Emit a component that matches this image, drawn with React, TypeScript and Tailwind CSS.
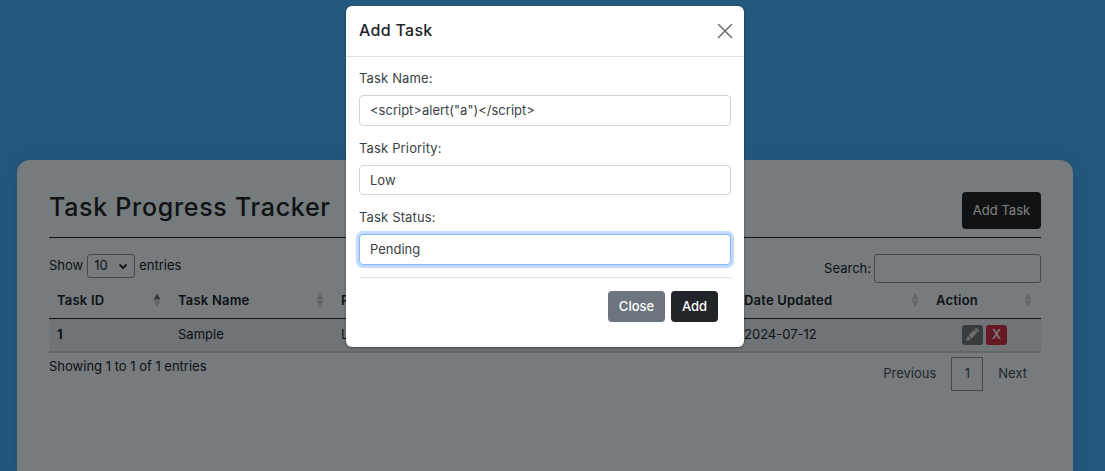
import { BsPencilFill } from "react-icons/bs"
import { X } from "lucide-react"

function SortMark({ active }: { active?: boolean }) {
  return (
    <svg width="8" height="14" viewBox="0 0 8 14" className="shrink-0">
      <path d="M4 0.5 7.5 6.5H0.5Z" fill="#1a1d20" opacity={active ? 0.6 : 0.2} />
      <path d="M4 13.5 0.5 7.5H7.5Z" fill="#1a1d20" opacity="0.2" />
    </svg>
  )
}

const columns = [
  { label: "Task ID", width: "w-[121px]", active: true },
  { label: "Task Name", width: "w-[163px]" },
  { label: "Priority", width: "w-[403px]" },
  { label: "Date Updated", width: "w-[192px]" },
  { label: "Action", width: "w-[113px]" },
]

function Tracker() {
  return (
    <div className="mr-[32px] ml-[17px] h-[320px] rounded-t-[13px] bg-[#edf6fb] bg-[radial-gradient(circle_at_50%_100%,#eaf7f7_0,#edf6fb_200px)] px-8 pt-8 shadow-[0_0_20px_rgba(0,0,0,0.12)]">
      <div className="flex h-[46px] items-start justify-between border-b border-[#212529] pb-2">
        <h1 className="text-[25px] leading-[30px] font-medium tracking-[0.7px] text-[#212529]">Task Progress Tracker</h1>
        <button className="h-[37px] w-[79px] rounded-[4px] bg-[#212529] text-[13px] text-white">Add Task</button>
      </div>

      <div className="mt-4 flex h-[29px] items-start justify-between text-[13px] text-[#212529]">
        <div className="flex h-6 items-center gap-1">
          <span>Show</span>
          <div className="flex h-6 w-12 items-center justify-between rounded-[3px] border border-[#8f9396] px-[6px]">
            <span>10</span>
            <svg width="10" height="10" viewBox="0 0 10 10">
              <path d="M1.5 3.5 5 7 8.5 3.5" fill="none" stroke="#212529" strokeWidth="1.8" />
            </svg>
          </div>
          <span>entries</span>
        </div>
        <div className="flex items-center gap-[3px]">
          <span>Search:</span>
          <div className="h-[29px] w-[167px] rounded-[3px] border border-[#8f9396]" />
        </div>
      </div>

      <table className="w-[992px] table-fixed border-collapse text-[13px] text-[#212529]">
        <thead>
          <tr className="h-[35px] border-b border-[#212529]">
            {columns.map((c) => (
              <th key={c.label} className={`${c.width} px-2 text-left font-semibold`}>
                <div className="flex items-center justify-between pr-[1px] tracking-[0.2px]">
                  <span>{c.label}</span>
                  <SortMark active={c.active} />
                </div>
              </th>
            ))}
          </tr>
        </thead>
        <tbody>
          <tr className="h-[34px] border-b-2 border-[#c6cace] bg-[#e1e9ef]">
            <td className="px-2 font-bold">1</td>
            <td className="px-2">Sample</td>
            <td className="px-2">Low</td>
            <td className="px-2">2024-07-12</td>
            <td className="px-2">
              <div className="flex items-center gap-[3px] pl-[26px]">
                <span className="flex h-5 w-[21px] items-center justify-center rounded-[3px] bg-[#72777b] text-[#d8dadc]">
                  <BsPencilFill size={13} />
                </span>
                <span className="flex h-5 w-[21px] items-center justify-center rounded-[3px] bg-[#cc3348] text-[13px] font-medium text-white">X</span>
              </div>
            </td>
          </tr>
        </tbody>
      </table>

      <div className="flex items-start justify-between text-[13px] text-[#212529]">
        <span className="pt-[4px]">Showing 1 to 1 of 1 entries</span>
        <div className="mt-[4px] flex items-center gap-[15px] pr-[14px] text-[#4b5156]">
          <span>Previous</span>
          <span className="flex h-[34px] w-[32px] items-center justify-center border border-[#8f9396]">1</span>
          <span>Next</span>
        </div>
      </div>
    </div>
  )
}

function Field({ label, value, focused }: { label: string; value: string; focused?: boolean }) {
  return (
    <div className="mb-[12px]">
      <label className="mb-[6px] block h-[21px] text-[13px] leading-[21px] tracking-[0.15px] text-[#3a3f44]">{label}</label>
      <input
        readOnly
        value={value}
        className={
          focused
            ? "block h-[30.5px] w-full rounded-[4px] border border-[#86b7fe] bg-white px-[10px] text-[13px] text-[#3a3f44] shadow-[0_0_0_3px_rgba(13,110,253,0.25)] outline-none"
            : "block h-[30.5px] w-full rounded-[4px] border border-[#ced4da] bg-white px-[10px] text-[13px] text-[#3a3f44] outline-none"
        }
      />
    </div>
  )
}

function AddTaskModal() {
  return (
    <div className="absolute inset-0 bg-black/50 pr-[15px]">
      <div className="mx-auto mt-[6px] w-[398px] rounded-[6px] bg-white shadow-[0_1px_3px_rgba(0,0,0,0.4)]">
        <div className="flex h-[51px] items-center justify-between border-b border-[#dee2e6] pr-[6px] pl-[13px]">
          <h2 className="pb-[2px] text-[16px] font-medium tracking-[0.3px] text-[#212529]">Add Task</h2>
          <X size={26} strokeWidth={1.4} className="text-[#6b7075]" />
        </div>
        <div className="px-[13px] pt-[11px]">
          <Field label="Task Name:" value={'<script>alert("a")</script>'} />
          <Field label="Task Priority:" value="Low" />
          <Field label="Task Status:" value="Pending" focused />
          <div className="mt-[1px] border-t border-[#dfe1e3]" />
          <div className="flex justify-end gap-[6px] pt-[13px] pr-[13px] pb-[25px]">
            <button className="h-[31px] w-[57px] rounded-[4px] bg-[#6c757d] pt-[1px] text-[13px] font-medium text-white">Close</button>
            <button className="h-[31px] w-[47px] rounded-[4px] bg-[#212529] pt-[1px] text-[13px] font-medium text-white">Add</button>
          </div>
        </div>
      </div>
    </div>
  )
}

export default function App() {
  return (
    <div className="relative h-[471px] w-[1105px] overflow-hidden bg-[#47b2fd] pt-[160px] font-['Inter',sans-serif]">
      <Tracker />
      <AddTaskModal />
    </div>
  )
}
